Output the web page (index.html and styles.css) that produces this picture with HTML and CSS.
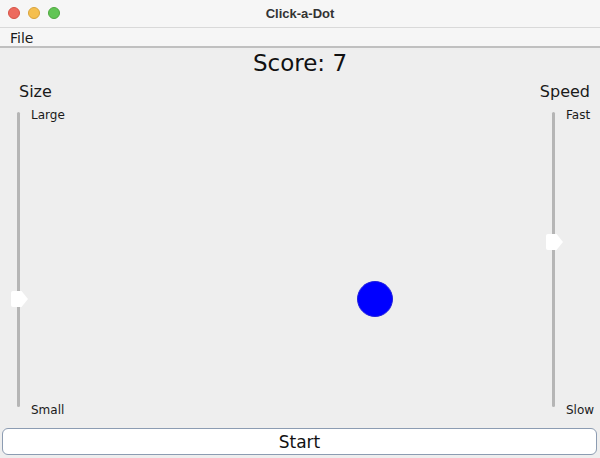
FILE: index.html
```html
<!DOCTYPE html>
<html>
<head>
<meta charset="utf-8">
<link rel="stylesheet" href="styles.css">
</head>
<body>
<div class="window">
  <div class="titlebar">
    <div class="lights">
      <span class="light red"></span>
      <span class="light yellow"></span>
      <span class="light green"></span>
    </div>
    <div class="title">Click-a-Dot</div>
  </div>
  <div class="menubar"><span class="menu">File</span></div>
  <div class="content">
    <div class="score">Score: 7</div>
    <div class="middle">
      <div class="side left">
        <div class="side-label">Size</div>
        <div class="slider">
          <div class="track"></div>
          <div class="thumb thumb-size"></div>
          <div class="ticks">
            <span>Large</span>
            <span>Small</span>
          </div>
        </div>
      </div>
      <div class="canvas">
        <div class="dot"></div>
      </div>
      <div class="side right">
        <div class="side-label">Speed</div>
        <div class="slider">
          <div class="track"></div>
          <div class="thumb thumb-speed"></div>
          <div class="ticks">
            <span>Fast</span>
            <span>Slow</span>
          </div>
        </div>
      </div>
    </div>
    <button class="start">Start</button>
  </div>
</div>
</body>
</html>
```
FILE: styles.css
```css
* { box-sizing: border-box; }
html, body { margin: 0; padding: 0; }
body {
  width: 600px;
  height: 458px;
  overflow: hidden;
  font-family: "DejaVu Sans", "Liberation Sans", sans-serif;
  color: #1a1a1a;
  background: #eeeeee;
}
.window { width: 600px; height: 458px; display: flex; flex-direction: column; }
.titlebar {
  height: 28px;
  background: #f6f6f6;
  border-bottom: 1px solid #d9d9d9;
  position: relative;
  display: flex;
  align-items: center;
  justify-content: center;
}
.lights { position: absolute; left: 8px; top: 7px; display: flex; gap: 8px; }
.light { width: 12px; height: 12px; border-radius: 50%; display: block; }
.red { background: #ed6a5e; border: 1px solid #d65346; }
.yellow { background: #f5bf4f; border: 1px solid #d9a33a; }
.green { background: #61c554; border: 1px solid #4ea73f; }
.title { font-size: 13px; font-weight: bold; color: #333; font-family: "Liberation Sans", sans-serif; }
.menubar {
  height: 20px;
  background: #f6f6f6;
  border-bottom: 2px solid #c0c0c0;
  padding-left: 10px;
  padding-top: 1px;
  font-size: 14px;
  line-height: 18px;
}
.content { flex: 1; display: flex; flex-direction: column; }
.score {
  text-align: center;
  font-size: 23px;
  height: 30px;
  line-height: 31px;
  color: #111;
}
.middle { flex: 1; display: flex; }
.side { width: 60px; display: flex; flex-direction: column; }
.side.right { align-items: flex-end; }
.side-label { font-size: 16px; height: 25px; line-height: 22px; padding-top: 3px; padding-left: 19px; }
.side.right .side-label { padding: 3px 10px 0 0; }
.slider { position: relative; height: 305px; width: 60px; }
.track {
  position: absolute;
  top: 9px;
  bottom: 1px;
  width: 3px;
  background: #b5b5b5;
  border-radius: 2px;
}
.left .track { left: 17px; }
.right .track { left: 12px; }
.thumb {
  position: absolute;
  width: 17px;
  height: 16px;
  background: #fff;
  clip-path: polygon(0 0, 62% 0, 100% 50%, 62% 100%, 0 100%);
  border-radius: 2px;
}
.thumb-size { left: 11px; top: 188px; }
.thumb-speed { left: 6px; top: 131px; }
.ticks {
  position: absolute;
  top: 4px;
  bottom: -10px;
  display: flex;
  flex-direction: column;
  justify-content: space-between;
  font-size: 12px;
  line-height: 16px;
}
.left .ticks { left: 31px; }
.right .ticks { left: 26px; }
.canvas { flex: 1; position: relative; }
.dot {
  position: absolute;
  left: 297px;
  top: 203px;
  width: 36px;
  height: 36px;
  border-radius: 50%;
  background: #0000ff;
  border: 1px solid #2020dd;
}
.start {
  margin: 0 3px 3px 2px;
  height: 27px;
  background: #fff;
  border: 1px solid #8c9cb2;
  border-radius: 6px;
  font-family: "DejaVu Sans", sans-serif;
  font-size: 17px;
  color: #111;
  padding: 0;
}
```
